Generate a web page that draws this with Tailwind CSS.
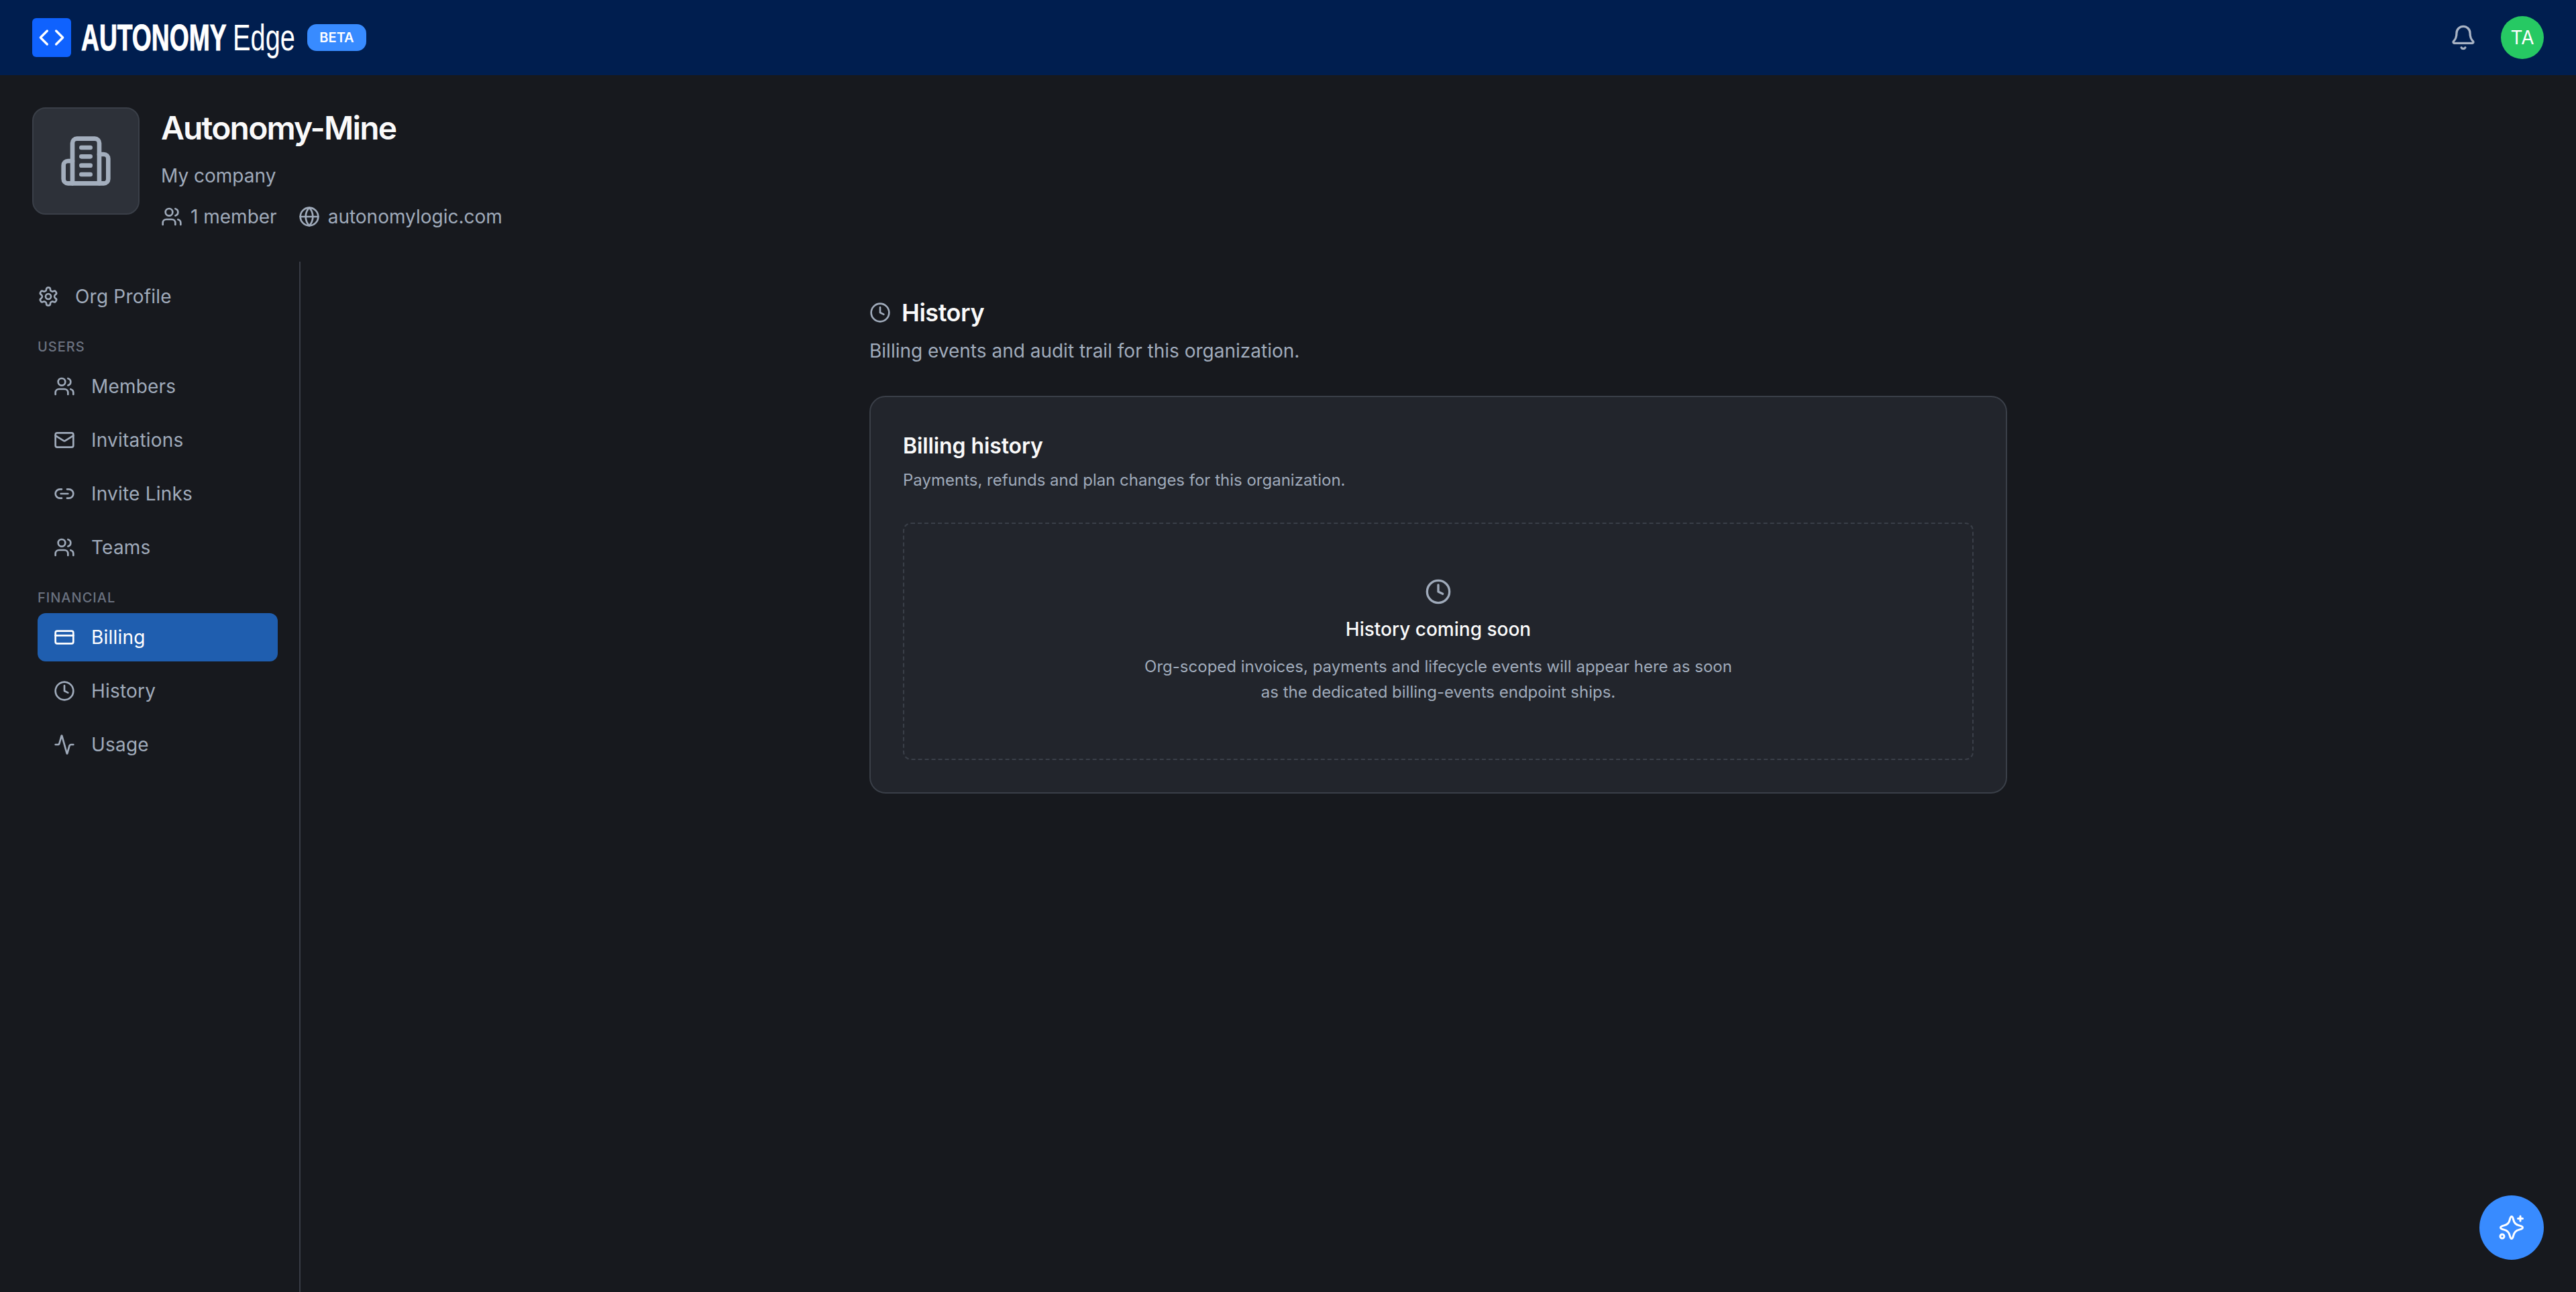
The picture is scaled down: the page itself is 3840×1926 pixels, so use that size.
<!doctype html>
<html lang="en">
<head>
<meta charset="utf-8">
<title>Autonomy Edge</title>
<script src="https://cdn.jsdelivr.net/npm/@tailwindcss/browser@4"></script>
</head>
<body class="bg-[#17191e] font-['Inter',sans-serif] antialiased">
<div class="relative flex flex-col h-[1926px] w-[3840px] overflow-hidden bg-[#17191e]">
  <header class="flex h-[112px] shrink-0 items-center justify-between bg-[#001e4f] px-12">
    <div class="flex items-center">
      <div class="flex h-[58px] w-[58px] items-center justify-center rounded-[6px] bg-[#0f62fe]">
        <svg class="h-10 w-10" viewBox="0 0 24 24" fill="none" stroke="white" stroke-width="2" stroke-linecap="round" stroke-linejoin="round"><path d="m16 18 6-6-6-6"/><path d="m8 6-6 6 6 6"/></svg>
      </div>
      <div class="ml-[15px] w-[216px] font-['Liberation_Sans',sans-serif] text-[56px] leading-[64px] font-bold text-white"><span class="inline-block origin-left scale-x-[0.665] whitespace-nowrap [-webkit-text-stroke:1px_white]">AUTONOMY</span></div>
      <div class="ml-[10px] w-[93px] font-['Liberation_Sans',sans-serif] text-[56px] leading-[64px] font-normal text-white"><span class="inline-block origin-left scale-x-[0.71] whitespace-nowrap">Edge</span></div>
      <div class="ml-[18px] flex h-10 w-[88px] items-center justify-center rounded-[14px] bg-[#388bff] text-[20px] font-semibold text-white">BETA</div>
    </div>
    <div class="flex items-center gap-9">
      <svg class="h-10 w-10" viewBox="0 0 24 24" fill="none" stroke="#a8b3c4" stroke-width="2" stroke-linecap="round" stroke-linejoin="round"><path d="M10.268 21a2 2 0 0 0 3.464 0"/><path d="M3.262 15.326A1 1 0 0 0 4 17h16a1 1 0 0 0 .74-1.673C19.41 13.956 18 12.499 18 8A6 6 0 0 0 6 8c0 4.499-1.411 5.956-2.738 7.326"/></svg>
      <div class="flex h-16 w-16 items-center justify-center rounded-full bg-[#26c963] text-[28px] text-white">TA</div>
    </div>
  </header>

  <section class="flex shrink-0 gap-8 px-12 pt-12 pb-[47px]">
    <div class="flex h-40 w-40 items-center justify-center rounded-[20px] border-2 border-[#3a3f48] bg-[#2d3139]">
      <svg class="h-20 w-20" viewBox="0 0 24 24" fill="none" stroke="#a3aebd" stroke-width="2" stroke-linecap="round" stroke-linejoin="round"><path d="M6 22V4a2 2 0 0 1 2-2h8a2 2 0 0 1 2 2v18Z"/><path d="M6 12H4a2 2 0 0 0-2 2v6a2 2 0 0 0 2 2h2"/><path d="M18 9h2a2 2 0 0 1 2 2v9a2 2 0 0 1-2 2h-2"/><path d="M10 6h4"/><path d="M10 10h4"/><path d="M10 14h4"/><path d="M10 18h4"/></svg>
    </div>
    <div>
      <h1 class="pt-px text-[48px] leading-[60px] font-semibold tracking-[-1.85px] text-[#fafafa]">Autonomy-Mine</h1>
      <p class="mt-[21px] text-[28px] leading-10 text-[#a0abbb]">My company</p>
      <div class="mt-[21px] flex items-center text-[28px] leading-10 text-[#a0abbb]">
        <svg class="h-8 w-8" viewBox="0 0 24 24" fill="none" stroke="currentColor" stroke-width="2" stroke-linecap="round" stroke-linejoin="round"><path d="M16 21v-2a4 4 0 0 0-4-4H6a4 4 0 0 0-4 4v2"/><circle cx="9" cy="7" r="4"/><path d="M22 21v-2a4 4 0 0 0-3-3.87"/><path d="M16 3.13a4 4 0 0 1 0 7.75"/></svg>
        <span class="ml-3">1 member</span>
        <svg class="ml-8 h-8 w-8" viewBox="0 0 24 24" fill="none" stroke="currentColor" stroke-width="2" stroke-linecap="round" stroke-linejoin="round"><circle cx="12" cy="12" r="10"/><path d="M12 2a14.5 14.5 0 0 0 0 20 14.5 14.5 0 0 0 0-20"/><path d="M2 12h20"/></svg>
        <span class="ml-3">autonomylogic.com</span>
      </div>
    </div>
  </section>

  <div class="flex min-h-0 flex-1">
    <aside class="w-[448px] shrink-0 border-r-2 border-[#383c46] pt-4 pr-8 pl-14 text-[28px] tracking-[0.2px] text-[#a0abbb]">
      <div class="flex h-[72px] items-center gap-6">
        <svg class="h-8 w-8" viewBox="0 0 24 24" fill="none" stroke="currentColor" stroke-width="2" stroke-linecap="round" stroke-linejoin="round"><path d="M12.22 2h-.44a2 2 0 0 0-2 2v.18a2 2 0 0 1-1 1.73l-.43.25a2 2 0 0 1-2 0l-.15-.08a2 2 0 0 0-2.73.73l-.22.38a2 2 0 0 0 .73 2.73l.15.1a2 2 0 0 1 1 1.72v.51a2 2 0 0 1-1 1.74l-.15.09a2 2 0 0 0-.73 2.73l.22.38a2 2 0 0 0 2.73.73l.15-.08a2 2 0 0 1 2 0l.43.25a2 2 0 0 1 1 1.73V20a2 2 0 0 0 2 2h.44a2 2 0 0 0 2-2v-.18a2 2 0 0 1 1-1.73l.43-.25a2 2 0 0 1 2 0l.15.08a2 2 0 0 0 2.73-.73l.22-.39a2 2 0 0 0-.73-2.73l-.15-.08a2 2 0 0 1-1-1.74v-.5a2 2 0 0 1 1-1.74l.15-.09a2 2 0 0 0 .73-2.73l-.22-.38a2 2 0 0 0-2.73-.73l-.15.08a2 2 0 0 1-2 0l-.43-.25a2 2 0 0 1-1-1.73V4a2 2 0 0 0-2-2z"/><circle cx="12" cy="12" r="3"/></svg>
        <span>Org Profile</span>
      </div>
      <div class="mt-6 mb-2 text-[20px] leading-[30px] font-medium tracking-[1px] text-[#6b7280]">USERS</div>
      <nav class="flex flex-col gap-2">
        <a class="flex h-[72px] items-center gap-6 rounded-xl px-6">
          <svg class="h-8 w-8" viewBox="0 0 24 24" fill="none" stroke="currentColor" stroke-width="2" stroke-linecap="round" stroke-linejoin="round"><path d="M16 21v-2a4 4 0 0 0-4-4H6a4 4 0 0 0-4 4v2"/><circle cx="9" cy="7" r="4"/><path d="M22 21v-2a4 4 0 0 0-3-3.87"/><path d="M16 3.13a4 4 0 0 1 0 7.75"/></svg>
          <span>Members</span>
        </a>
        <a class="flex h-[72px] items-center gap-6 rounded-xl px-6">
          <svg class="h-8 w-8" viewBox="0 0 24 24" fill="none" stroke="currentColor" stroke-width="2" stroke-linecap="round" stroke-linejoin="round"><rect x="2" y="4" width="20" height="16" rx="2"/><path d="m22 7-8.97 5.7a1.94 1.94 0 0 1-2.06 0L2 7"/></svg>
          <span>Invitations</span>
        </a>
        <a class="flex h-[72px] items-center gap-6 rounded-xl px-6">
          <svg class="h-8 w-8" viewBox="0 0 24 24" fill="none" stroke="currentColor" stroke-width="2" stroke-linecap="round" stroke-linejoin="round"><path d="M9 17H7A5 5 0 0 1 7 7h2"/><path d="M15 7h2a5 5 0 1 1 0 10h-2"/><line x1="8" x2="16" y1="12" y2="12"/></svg>
          <span>Invite Links</span>
        </a>
        <a class="flex h-[72px] items-center gap-6 rounded-xl px-6">
          <svg class="h-8 w-8" viewBox="0 0 24 24" fill="none" stroke="currentColor" stroke-width="2" stroke-linecap="round" stroke-linejoin="round"><path d="M16 21v-2a4 4 0 0 0-4-4H6a4 4 0 0 0-4 4v2"/><circle cx="9" cy="7" r="4"/><path d="M22 21v-2a4 4 0 0 0-3-3.87"/><path d="M16 3.13a4 4 0 0 1 0 7.75"/></svg>
          <span>Teams</span>
        </a>
      </nav>
      <div class="mt-6 mb-2 text-[20px] leading-[30px] font-medium tracking-[1px] text-[#6b7280]">FINANCIAL</div>
      <nav class="flex flex-col gap-2">
        <a class="flex h-[72px] items-center gap-6 rounded-xl bg-[#1f5eaf] px-6 text-white">
          <svg class="h-8 w-8" viewBox="0 0 24 24" fill="none" stroke="currentColor" stroke-width="2" stroke-linecap="round" stroke-linejoin="round"><rect x="2" y="5" width="20" height="14" rx="2"/><line x1="2" x2="22" y1="10" y2="10"/></svg>
          <span>Billing</span>
        </a>
        <a class="flex h-[72px] items-center gap-6 rounded-xl px-6">
          <svg class="h-8 w-8" viewBox="0 0 24 24" fill="none" stroke="currentColor" stroke-width="2" stroke-linecap="round" stroke-linejoin="round"><circle cx="12" cy="12" r="10"/><polyline points="12 6 12 12 16 14"/></svg>
          <span>History</span>
        </a>
        <a class="flex h-[72px] items-center gap-6 rounded-xl px-6">
          <svg class="h-8 w-8" viewBox="0 0 24 24" fill="none" stroke="currentColor" stroke-width="2" stroke-linecap="round" stroke-linejoin="round"><path d="M22 12h-2.48a2 2 0 0 0-1.93 1.46l-2.35 8.36a.25.25 0 0 1-.48 0L9.24 2.18a.25.25 0 0 0-.48 0l-2.35 8.36A2 2 0 0 1 4.49 12H2"/></svg>
          <span>Usage</span>
        </a>
      </nav>
    </aside>

    <main class="min-w-0 flex-1 pt-14">
      <div class="mx-auto w-[1696px]">
        <div class="flex items-center gap-4">
          <svg class="h-8 w-8 text-[#a0abbb]" viewBox="0 0 24 24" fill="none" stroke="currentColor" stroke-width="2" stroke-linecap="round" stroke-linejoin="round"><circle cx="12" cy="12" r="10"/><polyline points="12 6 12 12 16 14"/></svg>
          <h2 class="text-[36px] leading-10 font-semibold tracking-[-0.45px] text-[#fafafa]">History</h2>
        </div>
        <p class="mt-[17px] text-[28px] leading-10 text-[#a0abbb]">Billing events and audit trail for this organization.</p>
        <div class="mt-[47px] rounded-[24px] border-2 border-[#3a3f48] bg-[#22252c] px-12 pt-[49px] pb-12">
          <h3 class="text-[32px] leading-12 font-semibold tracking-[-0.1px] text-[#fafafa]">Billing history</h3>
          <p class="mt-[9px] text-[24px] leading-9 text-[#a0abbb]">Payments, refunds and plan changes for this organization.</p>
          <div class="mt-[45px] flex h-[354px] flex-col items-center rounded-xl border-2 border-dashed border-[#3a3f48] pt-[81px] text-center">
            <svg class="h-10 w-10 text-[#a0abbb]" viewBox="0 0 24 24" fill="none" stroke="currentColor" stroke-width="2" stroke-linecap="round" stroke-linejoin="round"><circle cx="12" cy="12" r="10"/><polyline points="12 6 12 12 16 14"/></svg>
            <p class="mt-4 text-[28px] leading-10 font-medium text-[#fafafa]">History coming soon</p>
            <p class="mt-[17px] w-[896px] text-[24px] leading-[38.4px] text-[#a0abbb]">Org-scoped invoices, payments and lifecycle events will appear here as soon as the dedicated billing-events endpoint ships.</p>
          </div>
        </div>
      </div>
    </main>
  </div>

  <button class="absolute right-12 bottom-12 flex h-24 w-24 items-center justify-center rounded-full bg-[#388bff]">
    <svg class="h-10 w-10" viewBox="0 0 40 40" fill="none" stroke="white" stroke-width="3" stroke-linecap="round" stroke-linejoin="round"><path d="M20 3.5c1.6 0 2.1 2 2.7 4.6.9 4.6 3.6 7.6 8.6 8.8 2.6.6 5.2 1.3 5.2 3.1s-2.6 2.5-5.2 3.1c-5 1.2-7.7 4.2-8.6 8.8-.6 2.6-1.1 4.6-2.7 4.6s-2.1-2-2.7-4.6c-.9-4.6-3.6-7.6-8.6-8.8-2.6-.6-5.2-1.3-5.2-3.1s2.6-2.5 5.2-3.1c5-1.2 7.7-4.2 8.6-8.8.6-2.6 1.1-4.6 2.7-4.6Z"/><path d="M33 3v7"/><path d="M29.5 6.5h7"/><circle cx="6" cy="33" r="3"/></svg>
  </button>
</div>
</body>
</html>
